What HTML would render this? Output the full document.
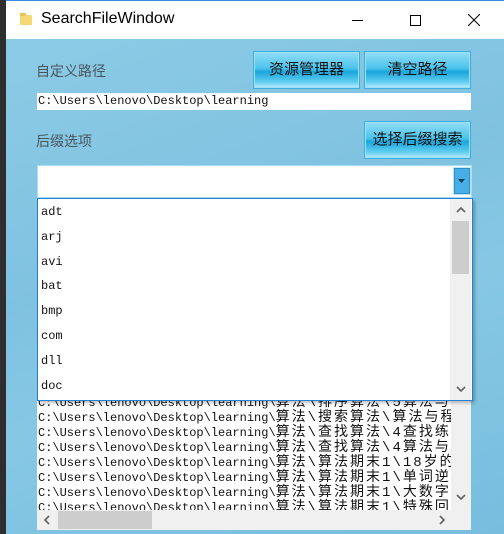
<!DOCTYPE html>
<html><head><meta charset="utf-8"><style>
*{margin:0;padding:0;box-sizing:border-box}
body{width:504px;height:534px;overflow:hidden;position:relative;background:#80c4e2;font-family:"Liberation Sans","Noto Sans CJK SC",sans-serif}
.abs{position:absolute}
.title{left:0;top:0;width:504px;height:39px;background:#fff;border-top:1px solid #3a8ee0}
.lb{left:0;top:0;width:6px;height:534px;background:#2e2e2e}
.bg2{left:6px;top:39px;width:498px;height:495px;background:linear-gradient(160deg,#8ccbe6 0%,#7fc2e0 40%,#86c8e4 60%,#78bddd 100%)}
.lbl{color:#4a565c;font-size:14px}
.btn{height:36px;border:1px solid #9fe0f6;outline:1px solid #3bb0e0;background:linear-gradient(#8fdcf6 0%,#4cc3ec 45%,#1aa6dc 55%,#5fcdf0 85%,#aee8fa 100%);font-size:15px;color:#111;text-align:center;line-height:34px}
.mono{font-family:"Liberation Mono","Noto Sans CJK SC",monospace;font-size:12px;color:#111}
.c{font-size:14px;letter-spacing:2px}
.sb{background:#f0f0f0}
</style></head><body>
<div class="abs bg2"></div>
<div class="abs title">
 <div class="abs" style="left:20px;top:14px;width:12px;height:10px;background:#f5d774;border-radius:1px"></div>
 <div class="abs" style="left:20px;top:12px;width:6px;height:3px;background:#e8c457"></div>
 <div class="abs" style="left:41px;top:9px;font-size:16px;color:#000">SearchFileWindow</div>
 <div class="abs" style="left:352px;top:19px;width:11px;height:1px;background:#000"></div>
 <div class="abs" style="left:410px;top:14px;width:11px;height:11px;border:1px solid #000"></div>
 <svg class="abs" style="left:468px;top:13px" width="12" height="12"><path d="M0 0L12 12M12 0L0 12" stroke="#000" stroke-width="1"/></svg>
</div>
<div class="abs lb"></div>
<div class="abs lbl" style="left:36px;top:61px">自定义路径</div>
<div class="abs btn" style="left:254px;top:52px;width:105px">资源管理器</div>
<div class="abs btn" style="left:365px;top:52px;width:105px">清空路径</div>
<div class="abs mono" style="left:37px;top:93px;width:434px;height:17px;background:#fff;padding-left:1px;line-height:17px">C:\Users\lenovo\Desktop\learning</div>
<div class="abs lbl" style="left:36px;top:131px">后缀选项</div>
<div class="abs btn" style="left:365px;top:122px;width:105px">选择后缀搜索</div>
<div class="abs" style="left:37px;top:165px;width:435px;height:33px;background:#fff;border:1px solid #a8dcf2"></div>
<div class="abs" style="left:454px;top:168px;width:16px;height:26px;background:#4aaee6;border:1px solid #2c8fd0;outline:1px solid #bfe6f8"></div>
<svg class="abs" style="left:458px;top:179px" width="8" height="5"><path d="M0 0H7L3.5 4Z" fill="#1a3a5a"/></svg>
<!-- results -->
<div class="abs" style="left:37px;top:398px;width:434px;height:132px;background:#fff;overflow:hidden">
 <div class="abs mono" style="left:1px;top:-2px;width:413px;overflow:hidden;white-space:nowrap;line-height:15px">
C:\Users\lenovo\Desktop\learning\<span class="c">算法\排序算法\5算法与程序</span><br>
C:\Users\lenovo\Desktop\learning\<span class="c">算法\搜索算法\算法与程序</span><br>
C:\Users\lenovo\Desktop\learning\<span class="c">算法\查找算法\4查找练习</span><br>
C:\Users\lenovo\Desktop\learning\<span class="c">算法\查找算法\4算法与程</span><br>
C:\Users\lenovo\Desktop\learning\<span class="c">算法\算法期末1\18岁的生</span><br>
C:\Users\lenovo\Desktop\learning\<span class="c">算法\算法期末1\单词逆序</span><br>
C:\Users\lenovo\Desktop\learning\<span class="c">算法\算法期末1\大数字加</span><br>
C:\Users\lenovo\Desktop\learning\<span class="c">算法\算法期末1\特殊回文</span>
 </div>
 <div class="abs sb" style="left:414px;top:0;width:20px;height:112px"></div>
 <svg class="abs" style="left:419px;top:96px" width="10" height="7"><path d="M1 1L5 5L9 1" stroke="#606060" stroke-width="1.6" fill="none"/></svg>
 <div class="abs sb" style="left:0;top:112px;width:434px;height:20px"></div>
 <div class="abs" style="left:21px;top:113px;width:94px;height:18px;background:#cdcdcd"></div>
 <svg class="abs" style="left:7px;top:117px" width="7" height="10"><path d="M5 1L1 5L5 9" stroke="#606060" stroke-width="1.6" fill="none"/></svg>
 <svg class="abs" style="left:402px;top:117px" width="7" height="10"><path d="M1 1L5 5L1 9" stroke="#606060" stroke-width="1.6" fill="none"/></svg>
</div>
<!-- dropdown -->
<div class="abs" style="left:37px;top:198px;width:436px;height:203px;background:#fff;border:1px solid #2680d6;box-shadow:2px 2px 3px rgba(0,0,0,.25)">
 <div class="abs mono" style="left:3px;top:1px;line-height:24.8px">adt<br>arj<br>avi<br>bat<br>bmp<br>com<br>dll<br>doc</div>
 <div class="abs sb" style="left:412px;top:0;width:21px;height:201px"></div>
 <div class="abs" style="left:414px;top:22px;width:17px;height:53px;background:#cdcdcd"></div>
 <svg class="abs" style="left:418px;top:7px" width="10" height="7"><path d="M1 6L5 2L9 6" stroke="#606060" stroke-width="1.6" fill="none"/></svg>
 <svg class="abs" style="left:418px;top:187px" width="10" height="7"><path d="M1 1L5 5L9 1" stroke="#606060" stroke-width="1.6" fill="none"/></svg>
</div>
</body></html>
